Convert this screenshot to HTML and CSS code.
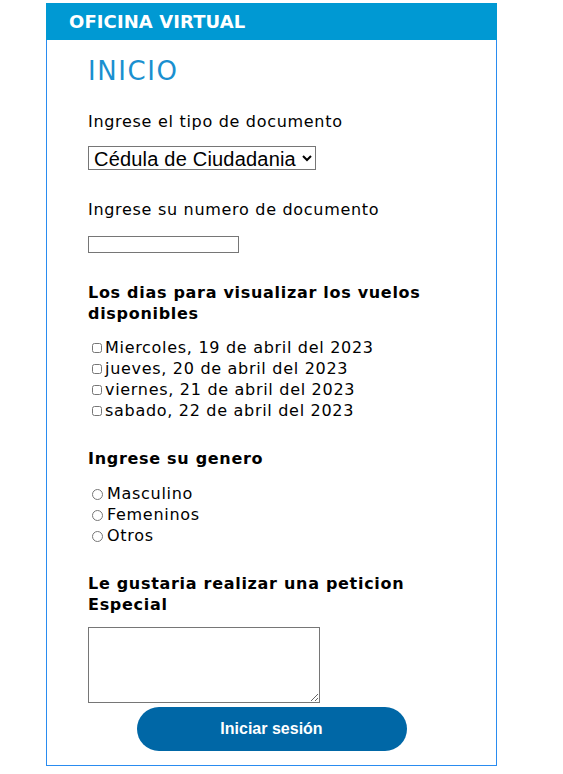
FILE: index.html
```html
<!DOCTYPE html>
<html lang="es">
<head>
<meta charset="utf-8">
<title>Oficina Virtual</title>
<link rel="stylesheet" href="styles.css">
</head>
<body>
<div class="panel">
  <div class="header">OFICINA VIRTUAL</div>
  <form class="body">
    <h1 class="title">INICIO</h1>
    <p class="label">Ingrese el tipo de documento</p>
    <select class="select"><option>Cédula de Ciudadania</option></select>
    <p class="label label-2">Ingrese su numero de documento</p>
    <input class="text-input" type="text">
    <h3 class="heading heading-1">Los dias para visualizar los vuelos disponibles</h3>
    <div class="options options-1">
      <label class="opt"><input class="check" type="checkbox">Miercoles, 19 de abril del 2023</label>
      <label class="opt"><input class="check" type="checkbox">jueves, 20 de abril del 2023</label>
      <label class="opt"><input class="check" type="checkbox">viernes, 21 de abril del 2023</label>
      <label class="opt"><input class="check" type="checkbox">sabado, 22 de abril del 2023</label>
    </div>
    <h3 class="heading">Ingrese su genero</h3>
    <div class="options">
      <label class="opt"><input class="radio" type="radio" name="g">Masculino</label>
      <label class="opt"><input class="radio" type="radio" name="g">Femeninos</label>
      <label class="opt"><input class="radio" type="radio" name="g">Otros</label>
    </div>
    <h3 class="heading">Le gustaria realizar una peticion Especial</h3>
    <textarea class="textarea"></textarea>
    <div class="actions"><button class="btn" type="button">Iniciar sesión</button></div>
  </form>
</div>
</body>
</html>
```
FILE: styles.css
```css
html, body { margin: 0; padding: 0; background: #fff; }
body { font-family: "DejaVu Sans", Verdana, sans-serif; color: #000; }
.panel {
  width: 449px;
  margin: 3px 0 0 46px;
  border: 1px solid #2a8cf0;
  border-top: 0;
}
.header {
  background: #0099d3;
  color: #fff;
  font-weight: bold;
  font-size: 18px;
  letter-spacing: 0.1px;
  height: 37px;
  line-height: 37px;
  padding-left: 23px;
  margin: 0 -1px;
}
.body {
  display: flex;
  flex-direction: column;
  align-items: flex-start;
  padding: 0 41px 14px 41px;
  letter-spacing: 0.7px;
}
.title {
  font-size: 26px;
  font-weight: normal;
  color: #1a90d0;
  margin: 16px 0 0 0;
  line-height: 30px;
  letter-spacing: 1.6px;
}
.label {
  font-size: 16px;
  margin: 26px 0 0 0;
  line-height: 20px;
}
.label-2 { margin-top: 30px; }
.select {
  margin-top: 14px;
  font-family: "Liberation Sans", Arial, sans-serif;
  font-size: 20px;
  letter-spacing: 0.2px;
  width: 228px;
  height: 24px;
  border: 1px solid #767676;
  border-radius: 0;
  background: #fff;
  color: #000;
  padding: 0 0 0 1px;
}
.text-input {
  margin-top: 16px;
  width: 151px;
  height: 17px;
  box-sizing: border-box;
  border: 1px solid #767676;
  padding: 0;
}
.heading {
  font-size: 16px;
  font-weight: bold;
  line-height: 21px;
  margin: 27px 0 0 0;
}
.heading-1 { margin-top: 29px; }
.options {
  display: flex;
  flex-direction: column;
  margin-top: 14px;
}
.options-1 { margin-top: 13px; }
.opt {
  display: flex;
  align-items: center;
  font-size: 16px;
  line-height: 21px;
}
.check {
  width: 10px;
  height: 10px;
  margin: 1px 3px 0 4px;
}
.radio {
  width: 11px;
  height: 11px;
  margin: 1px 4px 0 4px;
}
.textarea {
  margin-top: 12px;
  width: 232px;
  height: 76px;
  box-sizing: border-box;
  border: 1px solid #767676;
  resize: both;
}
.actions {
  align-self: stretch;
  display: flex;
  justify-content: center;
  margin-top: 4px;
}
.btn {
  width: 270px;
  height: 44px;
  border: 0;
  border-radius: 22px;
  background: #0067a6;
  color: #fff;
  font-family: "Liberation Sans", Arial, sans-serif;
  font-weight: bold;
  font-size: 16px;
  letter-spacing: 0;
}
```
